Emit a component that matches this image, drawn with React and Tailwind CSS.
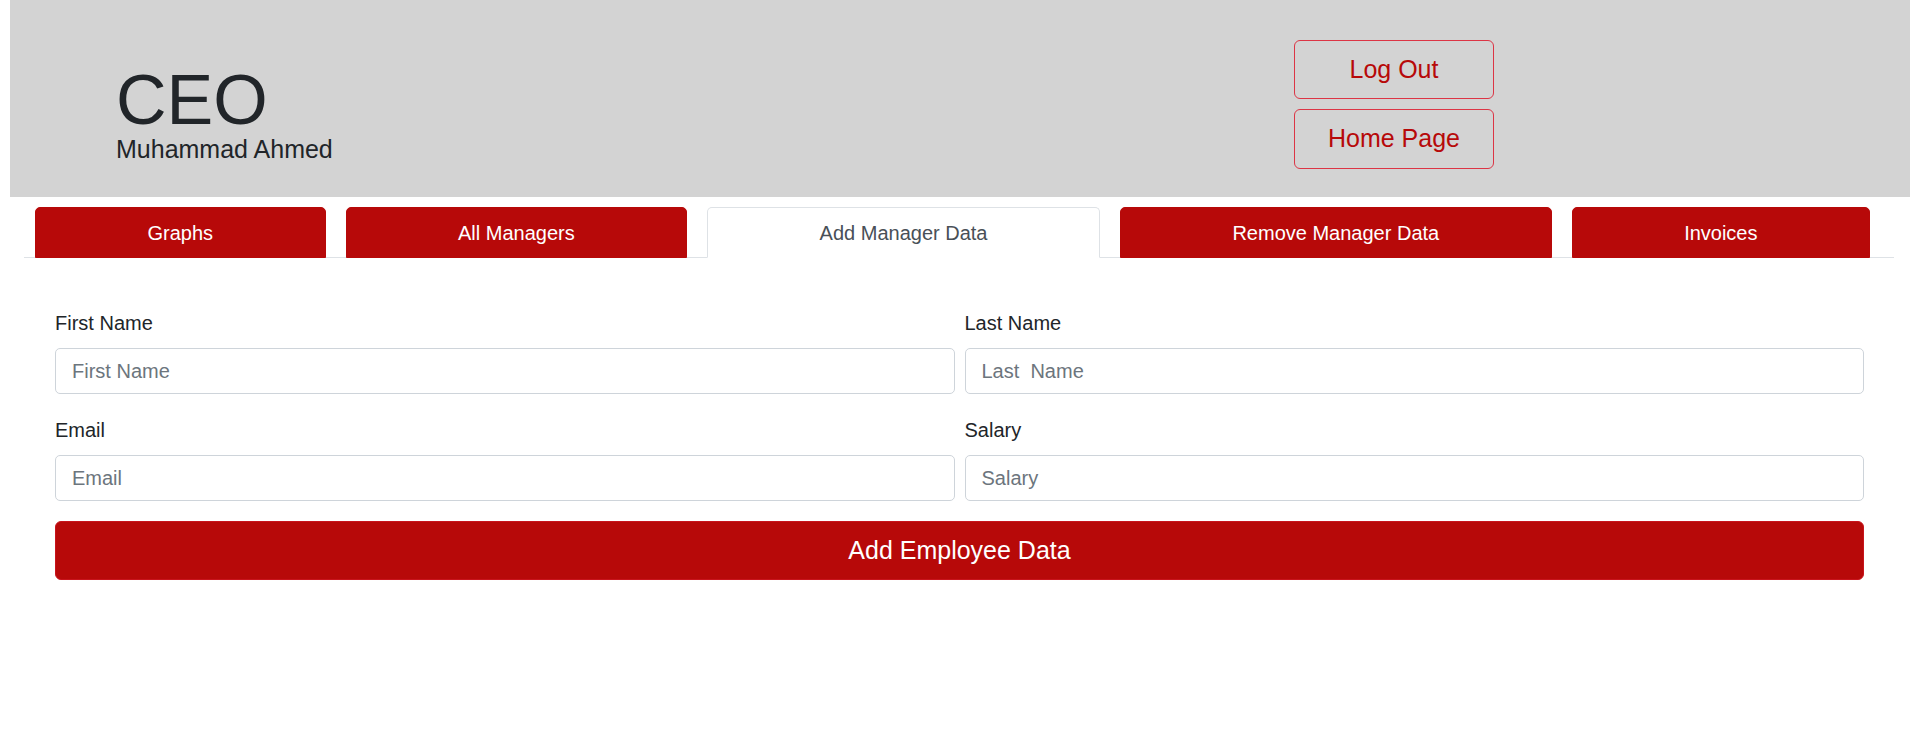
import React from "react";

const RED = "bg-[#b70909]";

function Field({ label, placeholder }) {
  return (
    <div className="flex flex-col">
      <label className="text-[20px] leading-[30px] text-[#212529] mb-[10px]">{label}</label>
      <input
        placeholder={placeholder}
        className="h-[46px] w-full rounded-[5px] border border-[#ced4da] bg-white px-[16px] text-[20px] leading-[30px] text-[#495057] placeholder:text-[#6c757d] outline-none"
      />
    </div>
  );
}

export default function App() {
  const tabs = [
    { name: "Graphs", active: false },
    { name: "All Managers", active: false },
    { name: "Add Manager Data", active: true },
    { name: "Remove Manager Data", active: false },
    { name: "Invoices", active: false },
  ];
  return (
    <div className="min-h-[741px] bg-white" style={{ fontFamily: '"Liberation Sans", Arial, sans-serif' }}>
      {/* Header */}
      <div className="ml-[10px] h-[197px] bg-[#d3d3d3] flex">
        <div className="w-[1284px] pl-[106px] pt-[65px] flex flex-col">
          <div className="text-[70px] leading-[70px] text-[#212529]">CEO</div>
          <div className="mt-[2px] text-[25px] leading-[25px] text-[#212529]">Muhammad Ahmed</div>
        </div>
        <div className="pt-[40px] flex flex-col gap-[10px]">
          <button className="h-[59px] w-[200px] rounded-[6px] border border-[#dc3545] text-[25px] text-[#b70909]">Log Out</button>
          <button className="h-[60px] w-[200px] rounded-[6px] border border-[#dc3545] text-[25px] text-[#b70909]">Home Page</button>
        </div>
      </div>

      {/* Tabs */}
      <div className="mt-[10px] ml-[24px] mr-[16px] border-b border-[#dee2e6] flex gap-[20px] pl-[11px] pr-[24px]">
        {tabs.map((t) => (
          <div
            key={t.name}
            className={
              "flex-auto -mb-px h-[51px] flex items-center justify-center rounded-t-[5px] border text-[20px] " +
              (t.active
                ? "bg-white border-[#dee2e6] border-b-white text-[#495057]"
                : RED + " border-[#b70909] text-white")
            }
          >
            {t.name}
          </div>
        ))}
      </div>

      {/* Form */}
      <div className="pl-[55px] pr-[46px] pt-[50px]">
        <div className="grid grid-cols-2 gap-x-[10px] gap-y-[21px]">
          <Field label="First Name" placeholder="First Name" />
          <Field label="Last Name" placeholder="Last  Name" />
          <Field label="Email" placeholder="Email" />
          <Field label="Salary" placeholder="Salary" />
        </div>
        <button className={"mt-[20px] w-full h-[59px] rounded-[6px] border border-[#c8141c] text-[25px] text-white " + RED}>
          Add Employee Data
        </button>
      </div>
    </div>
  );
}
